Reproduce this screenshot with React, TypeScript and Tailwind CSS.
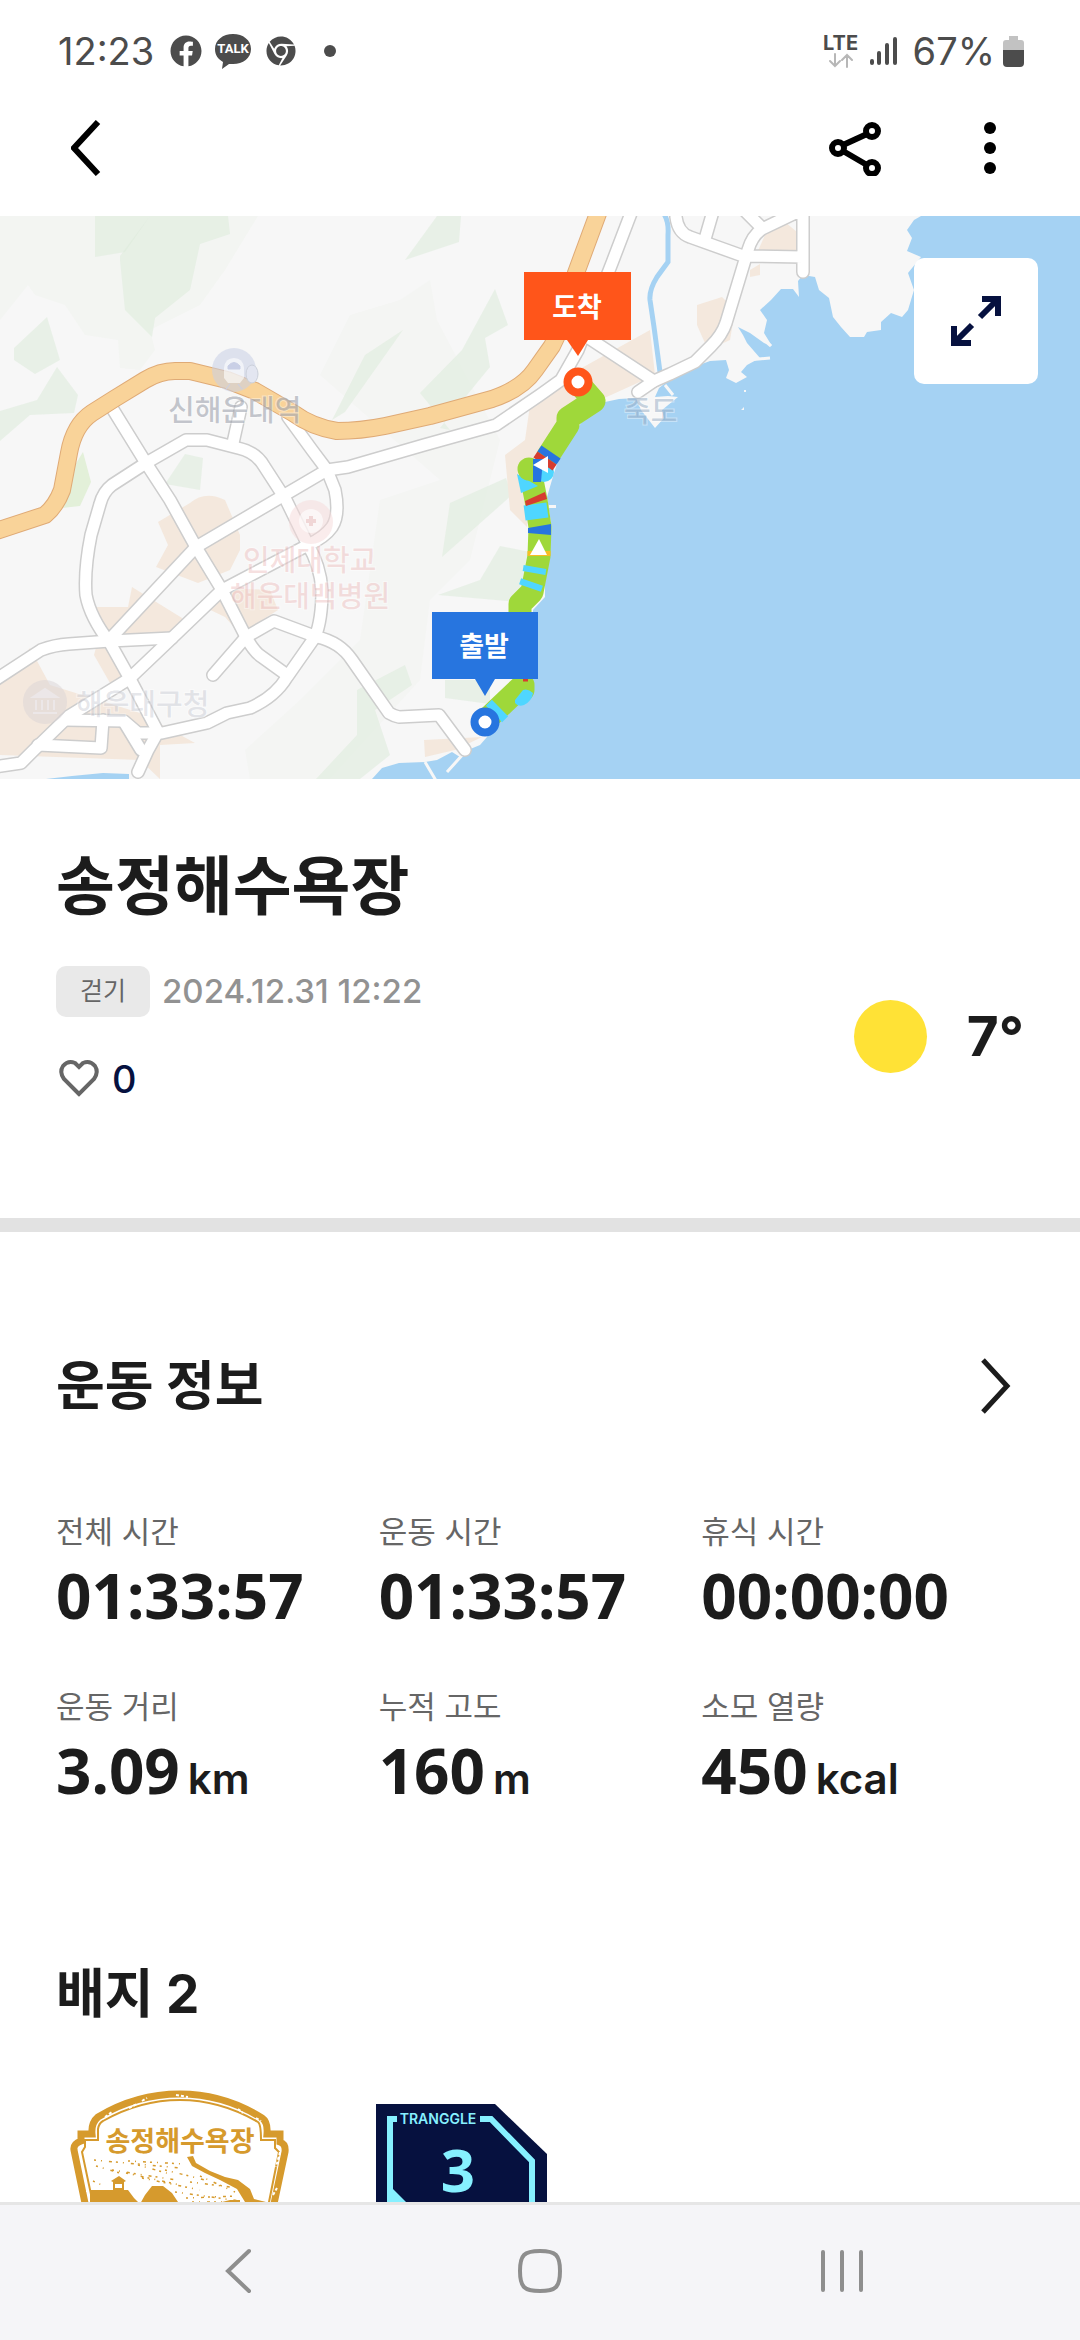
import type { ReactNode } from "react";
import { FaChrome, FaFacebook } from "react-icons/fa";

const stats = [
  { label: "전체 시간", value: "01:33:57" },
  { label: "운동 시간", value: "01:33:57" },
  { label: "휴식 시간", value: "00:00:00" },
  { label: "운동 거리", value: "3.09", unit: "km" },
  { label: "누적 고도", value: "160", unit: "m" },
  { label: "소모 열량", value: "450", unit: "kcal" },
];

const COAST =
  "M0 216H921L914 220L907 230L912 238L907 251L921 257L908 273L914 290L908 310L902 317L891 313L881 322V330L867 332L864 337H850L841 327L833 317L829 298L819 290L815 277L803 275L798 281L799 297L793 289H781L771 300L760 310L767 320L764 333L772 346L764 343L750 333L738 327L743 335L747 343L760 358L747 365L741 372L747 377L736 383L726 378L729 370L726 360L710 361L691 368L673 377L659 388L655 397L668 396L678 397L662 410L664 418L655 428L641 410L636 398L619 399L605 402L598 407L581 423L559 458L554 473L547 497L551 523L550 557L545 580V597L533 610V680L510 710L500 720L487 737L480 745L468 750L460 757L452 752L437 760L425 762L399 763L382 768L372 779H129V774L103 773L72 776L46 779H0Z";

const HIGHWAY =
  "M-10 533L45 515Q56 506 62 490L69 453Q74 425 92 413L114 399L145 380Q160 371 175 371H190L227 380L255 391L293 413Q312 427 337 431Q360 431 385 426L430 416L492 399Q522 389 535 370L552 346L561 327L576 273L600 208";

const ROADS = [
  "M112 408L146 463L170 500L196 547L222 590L246 637Q254 652 262 657L287 675",
  "M146 463L186 440H207L238 448Q256 452 264 466L286 500L308 545Q320 565 322 590Q322 620 315 637L287 677Q275 697 250 708L227 713L207 723L162 733H138L124 721L65 720",
  "M146 463L112 485Q103 492 100 504L91 535Q84 570 86 595Q90 617 110 643L129 677L158 732L148 750L138 772",
  "M241 407L233 443",
  "M288 417L312 450L327 470",
  "M196 547L327 470L348 467L424 445L496 425L540 395L561 380L578 350L612 263L633 208",
  "M196 547L110 639",
  "M327 470L335 490Q340 515 332 527Q325 537 308 545L222 590L172 638L129 679L69 716L34 750L21 763L-6 767",
  "M-8 682L41 650Q54 645 69 644L110 641L172 638",
  "M213 675L246 637L274 621L317 637Q340 642 352 660L389 713Q394 716 399 717L439 715L465 750",
  "M38 745L101 748L103 720M124 722L141 750",
  "M676 208V217Q678 233 690 237L743 256L803 257M803 208V272M810 206L762 229Q752 236 748 250L726 323Q722 335 711 346L695 362L670 374L654 381L638 392",
  "M705 239L714 208M744 210L760 226M654 381L590 339",
];

const GREENS = [
  "M120 256L150 216H228L230 234L200 244L190 290L155 318L152 337L125 310L120 260Z",
  "M95 216H150L125 252L95 257Z",
  "M14 348L47 317L60 360L35 374L14 360Z",
  "M0 411L37 400L57 367L78 395L74 413L30 415L0 441Z",
  "M405 260L437 216H461L459 242Z",
  "M495 289L508 325L485 338L490 367L440 428L450 430L420 393L462 350Z",
  "M403 330L365 355L332 420L345 412Z",
  "M165 484L185 454L203 458L200 490Z",
  "M450 503L506 478L512 495L442 557Z",
  "M500 546L530 552V603L438 595L480 580Z",
  "M316 779L357 735V690L405 665L412 685L375 710L390 755L360 779Z",
  "M445 680L490 680V704L445 698Z",
];

const SANDS = [
  "M158 522L190 503Q205 490 225 500L240 535V550L230 570L198 583L156 567L168 545Z",
  "M96 607L128 607L132 587L182 618V628L172 640L110 640L96 620Z",
  "M98 640L129 677L110 683L94 655Z",
  "M200 605L220 588L270 590L278 610L240 634L225 617Z",
  "M0 685L30 648L50 685L140 713L195 743L160 745V779L140 760L0 755Z",
  "M505 455L525 440L530 405L556 385L578 370L650 330L655 375L600 400L560 430L530 500L527 527L510 510Z",
  "M697 305L722 297L735 310L730 340L708 350L697 325Z",
  "M757 253L765 235L785 222L797 232V252Z",
  "M750 270L760 264V275L750 277Z",
  "M424 740L482 737L455 750L425 757Z",
];

function RouteMap() {
  return (
    <svg viewBox="0 216 1080 563" className="block w-full" role="img" aria-label="경로 지도">
      <rect y="216" width="1080" height="563" fill="#a5d2f3" />
      <path d={COAST} fill="#f7f7f7" />
      <path d="M0 216H258L225 270L200 305L150 330L155 350L140 370L120 368L118 340L85 335L65 305L35 295L28 285L0 320Z" fill="#f3f5f2" />
      <path d="M350 315L400 300L430 280L437 320L500 440L470 560L430 600L420 680L330 779H250L245 750L300 700L360 640L380 500L440 480L320 375Z" fill="#f4f5f3" />
      {GREENS.map((d) => (
        <path key={d} d={d} fill="#dcebda" opacity=".55" />
      ))}
      <path d="M83 452L91 482L80 506L62 508L72 470Z" fill="#e3f0d9" />
      {SANDS.map((d) => (
        <path key={d} d={d} fill="#f4e8dd" />
      ))}
      <path d="M664 214Q669 222 668 235V262L657 277Q649 290 650 300L654 327L660 372" fill="none" stroke="#a5d2f3" strokeWidth="5" />
      <path d="M425 762L438 784M465 752L447 772M764 340L771 346M748 360L770 358M665 385L673 395" fill="none" stroke="#f7f7f7" strokeWidth="3" />
      <path d="M744 407L741 410H744ZM744 390H746V392H744ZM549 505H556V508H549Z" fill="#f7f7f7" />

      <g fill="none" strokeLinejoin="round" strokeLinecap="round">
        {ROADS.map((d) => (
          <path key={d} d={d} stroke="#cdcdcd" strokeWidth="14" />
        ))}
        {ROADS.map((d) => (
          <path key={d} d={d} stroke="#fff" strokeWidth="11" />
        ))}
        <path d={HIGHWAY} stroke="#dfaa76" strokeWidth="18" />
        <path d={HIGHWAY} stroke="#f9d399" strokeWidth="16" />
      </g>

      <circle cx="234" cy="370" r="22" fill="#c9cfe6" opacity=".55" />
      <path d="M224 378V368Q225 358 234 358Q243 358 244 368V378L240 383H228Z" fill="#fff" opacity=".6" />
      <path d="M228 366Q234 359 240 366V369H228ZM230 384L226 389M238 384L242 389" fill="#c9cfe6" stroke="#c9cfe6" />
      <ellipse cx="252" cy="374" rx="6" ry="9" fill="#e3e6f1" stroke="#cbd0da" />
      <circle cx="311" cy="522" r="22" fill="#f6d9d9" opacity=".5" />
      <circle cx="311" cy="521" r="12" fill="#fff" opacity=".6" />
      <path d="M306 521H316M311 516V526" stroke="#f0d6d6" strokeWidth="4" />
      <circle cx="45" cy="702" r="22" fill="#d9d3d6" opacity=".5" />
      <path d="M33 697L45 689L57 697ZM36 700V710M42 700V710M48 700V710M54 700V710M33 713H57" fill="#ece7e8" stroke="#ece7e8" strokeWidth="2" />

      <g className="font-['Noto_Sans_CJK_KR',sans-serif] text-[29px] font-medium" stroke="#fff" strokeOpacity=".4" strokeWidth="2" paintOrder="stroke">
        <text x="168" y="421" fill="#8c919e" fillOpacity=".5">신해운대역</text>
        <text x="243" y="571" fill="#e6a5a5" fillOpacity=".35">인제대학교</text>
        <text x="230" y="607" fill="#e6a5a5" fillOpacity=".35">해운대백병원</text>
        <text x="76" y="715" fill="#a8acba" fillOpacity=".3">해운대구청</text>
        <text x="624" y="422" fill="#7390b0" fillOpacity=".4">죽도</text>
      </g>

      <g fill="none" strokeWidth="23" strokeLinejoin="round">
        <path d="M487 719L523 685V690M520 640V604L532 592L539 556L540 527L536 500L530 470" stroke="#9fd83a" strokeLinecap="round" />
        <path d="M580 385L594 401L568 418V425L548 456" stroke="#9fd83a" strokeLinecap="round" />
        <path d="M515 703V700L523 690Q528 688 533 693Q532 701 524 705Q518 707 515 703Z" fill="#4fd6ff" stroke="none" />
        <path d="M500 708L494 714M530 588L532 582M534 573L535 567M537 519L535 504" stroke="#4fd6ff" />
        <path d="M517 474L538 486L521 493Z" fill="#4fd6ff" stroke="none" />
        <path d="M525 501L545 492L547 499L526 506Z" fill="#d63c30" stroke="none" />
        <path d="M528 528L551 524V535L528 533Z" fill="#2775df" stroke="none" />
        <path d="M539 556V551" stroke="#f6bd25" />
        <circle cx="544" cy="472" r="10" fill="#4fd6ff" stroke="none" />
        <path d="M551 452L547 458" stroke="#2775df" />
        <path d="M547 458L543 464" stroke="#d63c30" />
        <circle cx="529" cy="469" r="11.5" fill="#9fd83a" stroke="none" />
        <path d="M533 459H543L541 482H533Z" fill="#2775df" stroke="none" />
        <path d="M533 465L548 456V473ZM530 555L539 539L547 555Z" fill="#fff" stroke="none" />
        <path d="M523 680H528" stroke="#d63c30" strokeWidth="3" />
      </g>

      <g className="font-['Noto_Sans_CJK_KR',sans-serif] text-[27px] font-bold" fill="#fff" textAnchor="middle">
        <path d="M524 272H631V340H588L578 356L567 340H524Z" fill="#ff551a" />
        <text x="577" y="317">도착</text>
        <path d="M432 612H538V679H495L485 696L475 679H432Z" fill="#2775df" />
        <text x="484" y="656">출발</text>
      </g>
      <circle cx="578" cy="382" r="10.5" fill="#fff" stroke="#ff551a" strokeWidth="8" />
      <circle cx="485" cy="722" r="10.5" fill="#fff" stroke="#2775df" strokeWidth="8" />
    </svg>
  );
}

function StatusBar() {
  return (
    <div className="flex h-[102px] items-center justify-between pl-[58px] pr-[56px] text-[#4c4c4c]">
      <div className="flex items-center">
        <span className="w-[112px] text-[38px] leading-[44px]">12:23</span>
        <FaFacebook className="size-8" aria-hidden />
        <svg viewBox="0 0 38 36" className="ml-3 h-9 w-[38px]" aria-hidden>
          <path d="M19 1C9 1 1 7 1 16C1 22 4 26 9 29L8 36L15 31H19C29 31 37 25 37 16C37 7 29 1 19 1Z" fill="currentColor" />
          <text x="19" y="20" textAnchor="middle" fill="#fff" className="font-['Roboto',sans-serif] text-[13px] font-bold">TALK</text>
        </svg>
        <FaChrome className="ml-[14px] size-[30px]" aria-hidden />
        <span className="ml-7 size-3 rounded-full bg-current" />
      </div>
      <div className="flex items-center">
        <div className="mr-3 flex w-8 flex-col items-center">
          <span className="text-[20px] font-bold leading-[18px]">LTE</span>
          <svg viewBox="0 0 24 15" className="mt-px h-[15px] w-6" fill="none" stroke="#b7b7b7" strokeWidth="2" strokeLinecap="round" aria-hidden>
            <path d="M6 1V13M1 8L6 13L11 8M18 14V2M13 7L18 2L23 7" />
          </svg>
        </div>
        <svg viewBox="0 0 28 30" className="mr-4 h-[30px] w-7" stroke="currentColor" strokeWidth="4" strokeLinecap="round" aria-hidden>
          <path d="M3 25V27M10 17V27M18 9V27M26 3V27" />
        </svg>
        <span className="mr-2 text-[38px] leading-[44px]">67%</span>
        <svg viewBox="0 0 21 32" className="h-8 w-[21px]" aria-hidden>
          <path d="M6 1H15V5H18Q21 5 21 8V16H0V8Q0 5 3 5H6Z" fill="#c2c2c2" />
          <path d="M0 15H21V28Q21 32 17 32H4Q0 32 0 28Z" fill="currentColor" />
        </svg>
      </div>
    </div>
  );
}

function IconButton({ label, className, children }: { label: string; className: string; children: ReactNode }) {
  return (
    <button type="button" aria-label={label} className={`flex items-center justify-center ${className}`}>
      {children}
    </button>
  );
}

function TopBar() {
  return (
    <header className="flex h-[92px] items-center justify-between pl-[54px] pr-[58px] text-black">
      <IconButton label="뒤로" className="size-16">
        <svg viewBox="0 0 30 56" className="h-14 w-[30px]" fill="none" stroke="currentColor" strokeWidth="6" aria-hidden>
          <path d="M27 2L3 28L27 54" />
        </svg>
      </IconButton>
      <div className="flex items-center gap-[72px]">
        <IconButton label="공유" className="size-16">
          <svg viewBox="0 0 54 56" className="h-14 w-[54px]" fill="none" stroke="currentColor" strokeWidth="6" aria-hidden>
            <circle cx="11" cy="28" r="6" />
            <circle cx="45" cy="11" r="6" />
            <circle cx="45" cy="48" r="6" />
            <path d="M16 25L40 14M16 31L40 45" />
          </svg>
        </IconButton>
        <IconButton label="더보기" className="size-16">
          <svg viewBox="0 0 12 52" className="h-[52px] w-3" fill="currentColor" aria-hidden>
            <circle cx="6" cy="6" r="6" />
            <circle cx="6" cy="26" r="6" />
            <circle cx="6" cy="46" r="6" />
          </svg>
        </IconButton>
      </div>
    </header>
  );
}

function BeachBadge() {
  return (
    <svg viewBox="70 2088 220 200" className="w-[220px]" role="img" aria-label="송정해수욕장 배지">
      <path d="M91 2230L74 2148Q73 2142 81 2139V2132H92Q91 2121 98 2115Q136 2092 180 2092Q224 2092 262 2116Q268 2120 267 2132H280V2140Q286 2142 285 2150L268 2230" fill="none" stroke="#d69a2d" strokeWidth="7" />
      <path d="M99 2230L82 2150L85 2145V2138H98V2127Q99 2121 103 2119Q140 2098 180 2098Q220 2098 258 2120Q261 2122 261 2138H275V2146L279 2150L263 2230" fill="none" stroke="#d69a2d" strokeWidth="2" />
      <path d="M105 2115L112 2110M129 2106L137 2102M142 2099L147 2096M176 2093L188 2095M238 2107L243 2111M256 2116L261 2119M280 2150L276 2165M87 2184V2190M277 2186L273 2193" stroke="#fff" strokeWidth="2" strokeDasharray="3 2" />
      <text x="180" y="2149" textAnchor="middle" fill="#d69a2d" className="font-['Noto_Sans_CJK_KR',sans-serif] text-[27px] font-bold">송정해수욕장</text>
      <path d="M90 2188H113V2180L111 2179L119 2174L126 2179L124 2180V2188H128L134 2196L140 2202L145 2193L152 2184H163L172 2191L180 2203V2260H90Z" fill="#d69a2d" />
      <path d="M187 2155L193 2154L196 2161L210 2169L225 2175L238 2178L250 2187L254 2197L266 2200V2240H250L245 2200L237 2187L220 2178L205 2171L192 2164Z" fill="#d69a2d" />
      <path d="M115 2182H122V2186H115Z" fill="#fff" />
      <path
        d="M94 2158L180 2166M93 2179L104 2184M112 2168L176 2178M128 2159L186 2162M126 2171L180 2183M142 2176L200 2188M165 2168L205 2178M175 2190L240 2199M190 2180L230 2185M186 2196L236 2194M192 2200H238M200 2174L235 2190M96 2164L120 2171M138 2163L170 2172"
        stroke="#d69a2d"
        strokeWidth="1.5"
        strokeDasharray="2 5 1 7 3 4"
      />
      <path d="M198 2202H240V2198H230L222 2200H208Z" fill="#d69a2d" />
    </svg>
  );
}

function LevelBadge() {
  return (
    <svg viewBox="376 2088 172 200" className="w-[172px]" role="img" aria-label="트랭글 레벨 배지">
      <path d="M376 2102H495L547 2152V2240L495 2288H376Z" fill="#06113f" />
      <path d="M397 2117H390V2260M480 2117H491L532 2159V2250" fill="none" stroke="#86f0ff" strokeWidth="6" />
      <path d="M392 2186L408 2202V2230H390Z" fill="#86f0ff" />
      <text x="438" y="2122" textAnchor="middle" fill="#86f0ff" className="font-['Inter',sans-serif] text-[14px] font-semibold">TRANGGLE</text>
      <text x="458" y="2190" textAnchor="middle" fill="#86f0ff" className="font-['Noto_Sans',sans-serif] text-[60px] font-bold">3</text>
    </svg>
  );
}

function NavBar() {
  return (
    <nav className="flex h-[138px] shrink-0 items-center justify-between border-t-[3px] border-[#e6e6e6] bg-[#f5f5f8] px-[198px] pb-1 text-[#8e8e8e]">
      <IconButton label="이전" className="size-20">
        <svg viewBox="0 0 28 46" className="h-[46px] w-7" fill="none" stroke="currentColor" strokeWidth="4" strokeLinecap="round" aria-hidden>
          <path d="M25 3L4 23L25 43" />
        </svg>
      </IconButton>
      <IconButton label="홈" className="size-20">
        <svg viewBox="0 0 44 44" className="size-11" fill="none" stroke="currentColor" strokeWidth="4" aria-hidden>
          <path d="M22 2C38 2 42 6 42 22C42 38 38 42 22 42C6 42 2 38 2 22C2 6 6 2 22 2Z" />
        </svg>
      </IconButton>
      <IconButton label="최근 앱" className="size-20">
        <svg viewBox="0 0 44 44" className="size-11" stroke="currentColor" strokeWidth="4" strokeLinecap="round" aria-hidden>
          <path d="M3 3V41M22 3V41M41 3V41" />
        </svg>
      </IconButton>
    </nav>
  );
}

export default function App() {
  return (
    <div className="flex h-dvh flex-col overflow-hidden bg-white font-['Inter','Noto_Sans_CJK_KR',sans-serif] text-[#1c1c1c]">
      <StatusBar />
      <TopBar />
      <main className="mt-[22px] min-h-0 flex-1 overflow-y-auto [scrollbar-width:none]">
        <div className="relative">
          <RouteMap />
          <button
            type="button"
            aria-label="지도 확대"
            className="absolute right-[42px] top-[42px] flex h-[126px] w-[124px] items-center justify-center rounded-[10px] bg-white text-[#06113f]"
          >
            <svg viewBox="0 0 52 52" className="size-[52px]" fill="none" stroke="currentColor" strokeWidth="6" aria-hidden>
              <path d="M32 4H48V21M48 4L30 22M4 31V48H21M4 48L22 30" />
            </svg>
          </button>
        </div>

        <section className="flex items-end justify-between px-14 pb-[113px] pt-[67px]">
          <div>
            <h1 className="text-[64px] font-bold leading-[80px]">송정해수욕장</h1>
            <div className="mt-10 flex items-center gap-3">
              <span className="rounded-[10px] bg-[#e9e9e9] px-6 text-[25px] leading-[51px] text-[#666]">걷기</span>
              <time className="text-[33px] font-medium leading-[51px] text-[#929292]">2024.12.31 12:22</time>
            </div>
            <button type="button" aria-label="좋아요" className="mt-9 flex items-center text-[38px] font-medium leading-[52px] text-[#06113f]">
              <svg viewBox="0 0 46 44" className="mr-2.5 h-11 w-[46px]" fill="none" stroke="#666" strokeWidth="4" aria-hidden>
                <path d="M23 37L8 22Q3 15 7 9Q12 3 19 6L23 10L27 6Q34 3 39 9Q43 15 38 22Z" />
              </svg>
              0
            </button>
          </div>
          <div className="mb-8 flex items-center gap-10">
            <span className="size-[73px] rounded-full bg-[#ffe236]" role="img" aria-label="맑음" />
            <span className="text-[55px] font-bold leading-[73px]">7°</span>
          </div>
        </section>

        <div className="h-[14px] bg-[#e2e2e2]" />

        <section className="px-14 pt-[118px]">
          <div className="flex items-center justify-between">
            <h2 className="text-[53px] font-bold leading-[72px]">운동 정보</h2>
            <IconButton label="운동 정보 더보기" className="h-[72px] w-14">
              <svg viewBox="0 0 30 56" className="h-14 w-[30px]" fill="none" stroke="currentColor" strokeWidth="5" aria-hidden>
                <path d="M2 2L26 28L2 54" />
              </svg>
            </IconButton>
          </div>
          <dl className="mt-[87px] grid grid-cols-3 gap-y-[49px]">
            {stats.map((s) => (
              <div key={s.label}>
                <dt className="text-[31px] leading-[46px] text-[#666]">{s.label}</dt>
                <dd className="flex items-baseline gap-2 whitespace-nowrap leading-[80px]">
                  <span className="font-['Noto_Sans',sans-serif] text-[62px] font-bold">{s.value}</span>
                  {s.unit && <span className="text-[42px] font-semibold">{s.unit}</span>}
                </dd>
              </div>
            ))}
          </dl>
        </section>

        <section className="px-14 pt-[139px]">
          <h2 className="text-[53px] font-bold leading-[72px]">배지 2</h2>
          <div className="mt-[60px] flex gap-[86px] pl-[14px]">
            <BeachBadge />
            <LevelBadge />
          </div>
        </section>
      </main>
      <NavBar />
    </div>
  );
}
